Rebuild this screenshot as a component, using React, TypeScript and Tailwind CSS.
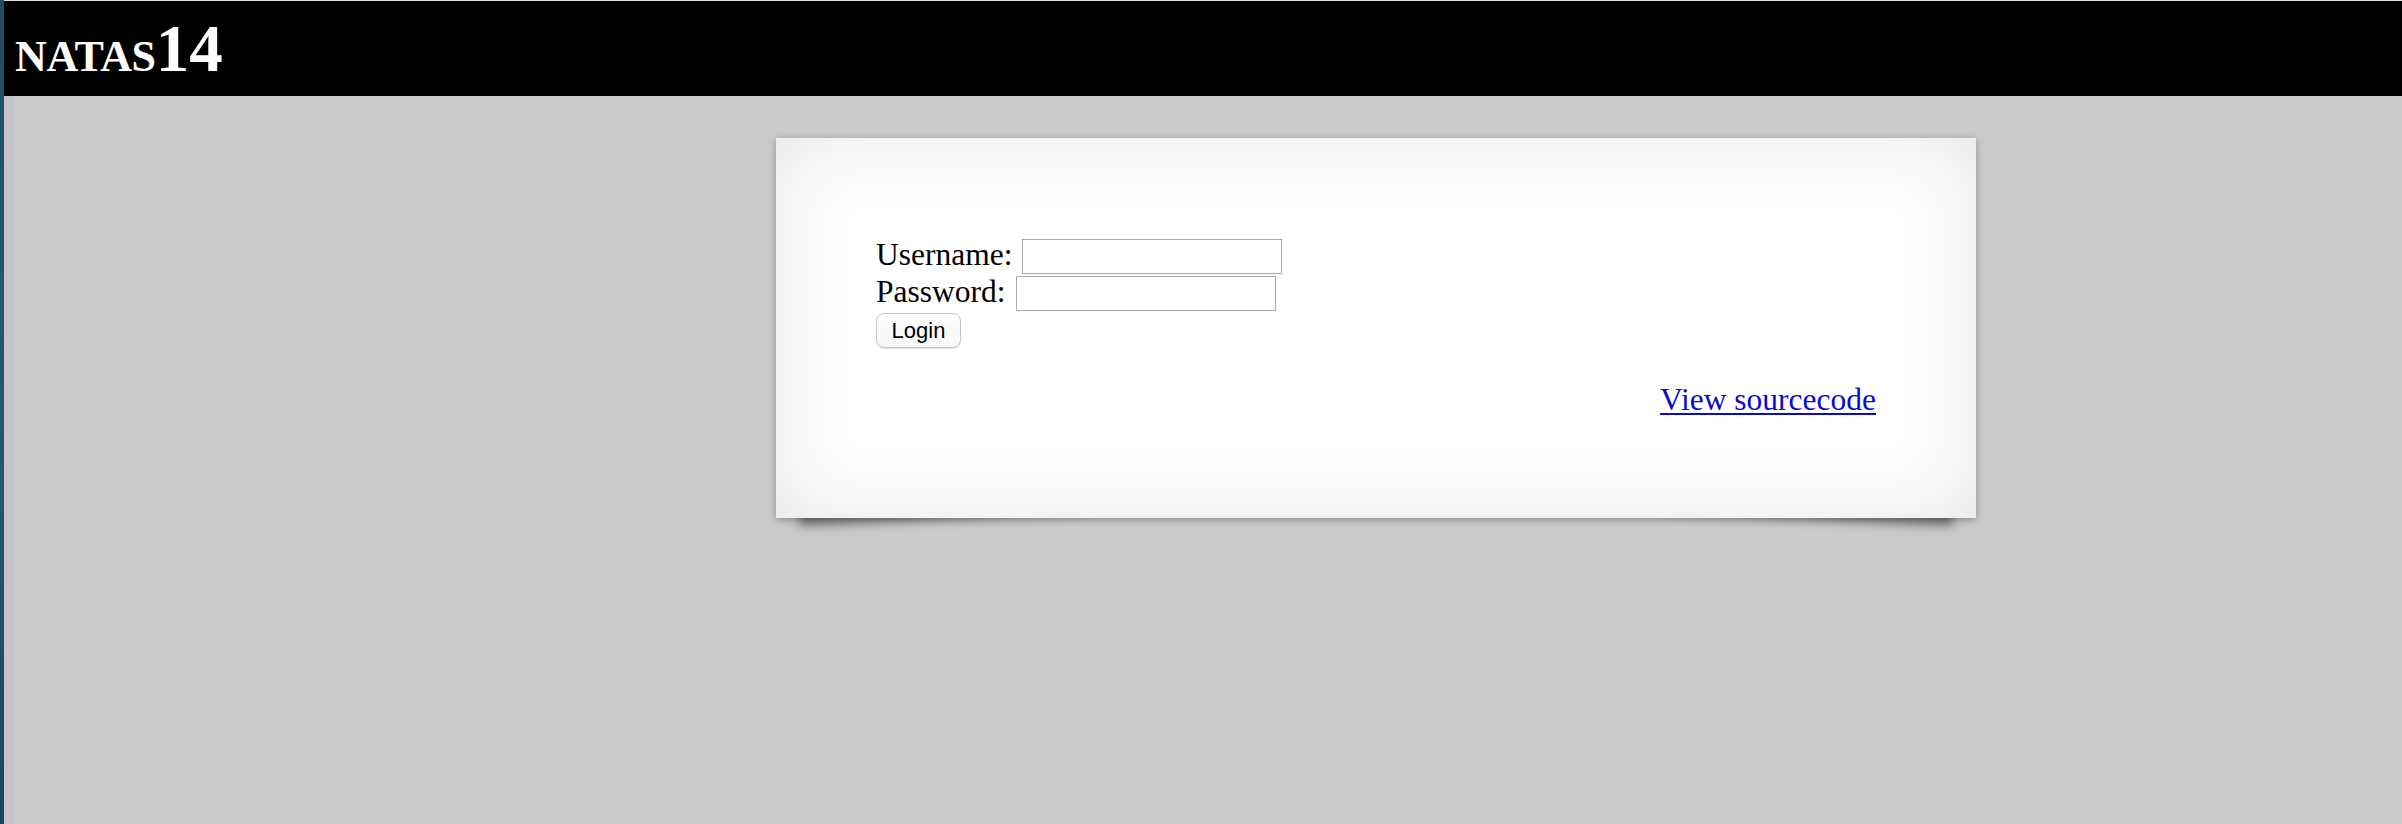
export default function App() {
  return (
    <div className="flex h-[824px] w-full overflow-hidden bg-[#cbcbcb] font-['Liberation_Serif',serif]">
      {/* window edge */}
      <div className="w-[4px] shrink-0 bg-gradient-to-b from-[#1f4b66] via-[#2a5874] to-[#1b4560]" />

      <div className="flex min-w-0 flex-1 flex-col">
        <div className="h-[1px] bg-[#dcdcdc]" />

        <header className="h-[95px] shrink-0 bg-black pl-[11px] pt-[14px] text-white">
          <h1 className="text-[67px] font-bold leading-[66px]">
            <span className="text-[44px] leading-none tracking-[-0.4px]">NATAS</span>14
          </h1>
        </header>

        <div className="flex flex-1">
          <div className="w-[3px] bg-[#c8c0c2]" />
          <div className="w-[8px] bg-[#c4c6cb]" />
          <div className="w-[32px] bg-[#cacaca]" />

          <main className="isolate flex-1">
            <div className="relative ml-[729px] mt-[42px] w-[1200px] bg-white shadow-[0_2px_8px_rgba(0,0,0,0.3),inset_0_0_80px_rgba(0,0,0,0.1)]">
              {/* lifted corner shadows */}
              <div className="absolute bottom-[20px] left-[20px] -z-10 h-[76px] w-[300px] -rotate-3 shadow-[0_20px_12px_rgba(0,0,0,0.45)]" />
              <div className="absolute bottom-[20px] right-[20px] -z-10 h-[76px] w-[300px] rotate-3 shadow-[0_20px_12px_rgba(0,0,0,0.45)]" />

              <div className="px-[100px] pb-[102px] pt-[100px] text-[31.5px] text-black">
                <form onSubmit={e => e.preventDefault()}>
                  <div className="flex h-[37px] items-start">
                    <span className="leading-[33px]">Username:</span>
                    <input name="username" className="ml-[10px] mt-[1px] h-[35px] w-[260px] border border-[#ababab] bg-white shadow-[0_0_2px_rgba(0,0,0,0.05)]" />
                  </div>
                  <div className="flex h-[37px] items-start">
                    <span className="leading-[33px]">Password:</span>
                    <input name="password" className="ml-[10px] mt-[1px] h-[35px] w-[260px] border border-[#ababab] bg-white shadow-[0_0_2px_rgba(0,0,0,0.05)]" />
                  </div>
                  <button
                    type="submit"
                    className="mt-[1px] flex h-[35px] w-[85px] items-center justify-center rounded-[8px] border border-[#c6c6c6] bg-gradient-to-b from-white to-[#f6f6f6] font-['Liberation_Sans',sans-serif] text-[22px] leading-none shadow-[0_1px_1px_rgba(0,0,0,0.12)]"
                  >
                    Login
                  </button>
                </form>
                <div className="mt-[35px] text-right leading-[33px]">
                  <a href="#" className="text-[#0b0bd0] underline decoration-2 underline-offset-[3px]">View sourcecode</a>
                </div>
              </div>
            </div>
          </main>
        </div>
      </div>
    </div>
  )
}
